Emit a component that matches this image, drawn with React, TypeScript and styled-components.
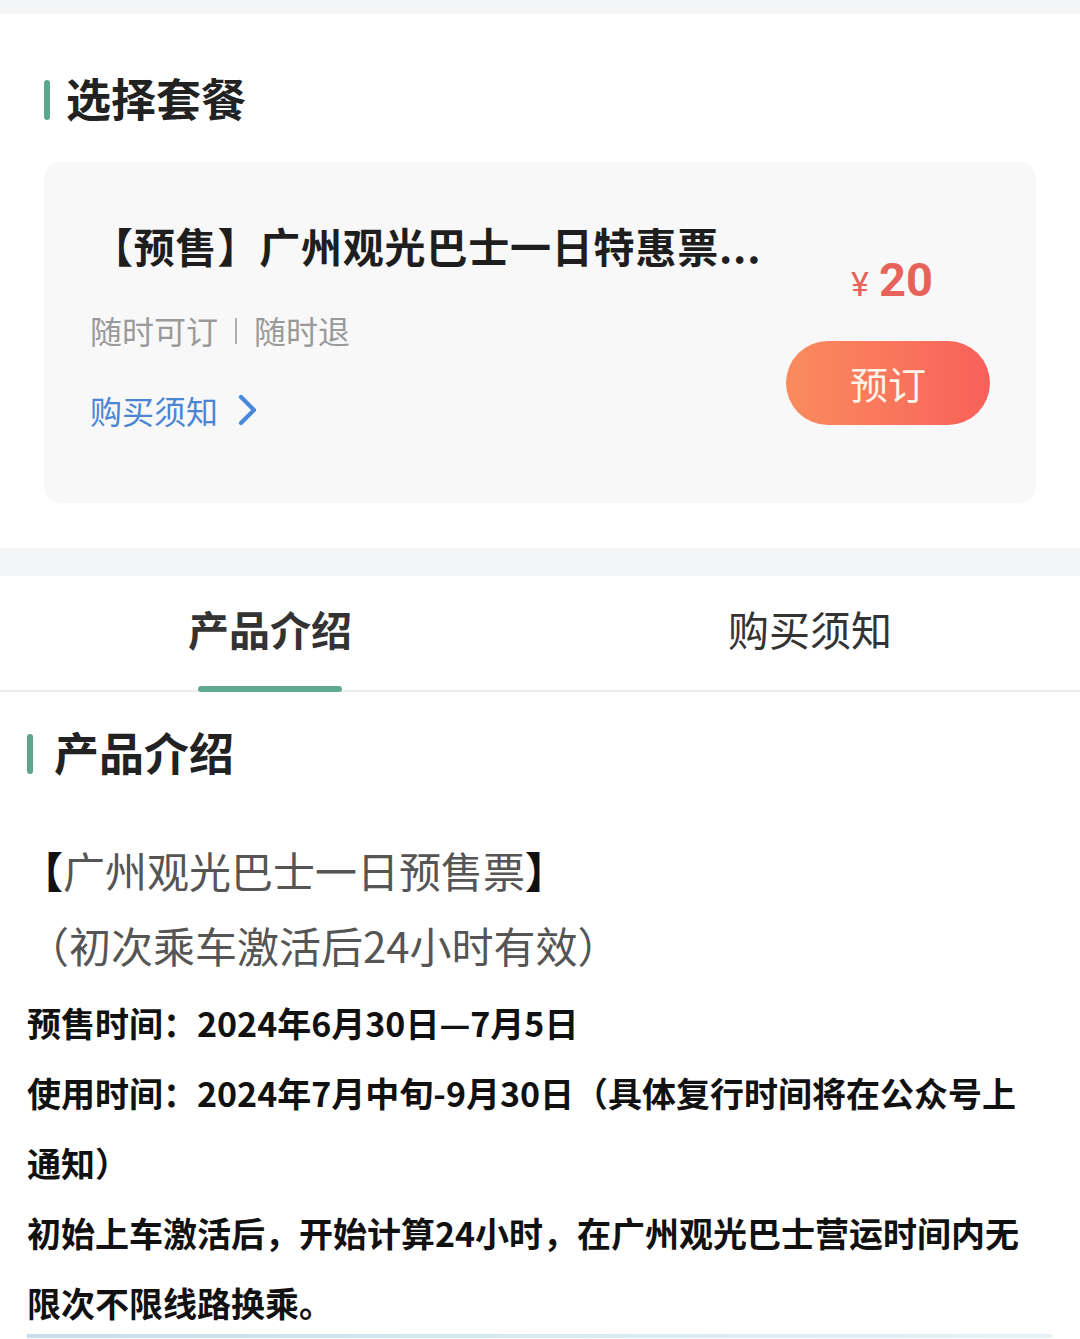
import React from "react";
import styled, { createGlobalStyle } from "styled-components";

const GlobalStyle = createGlobalStyle`
  * { box-sizing: border-box; }
  body {
    margin: 0;
    background: #ffffff;
    font-family: "Noto Sans CJK SC", "Noto Sans", sans-serif;
    color: #222;
  }
`;

const Page = styled.div`
  width: 1080px;
  min-height: 1339px;
  background: #ffffff;
  display: flex;
  flex-direction: column;
  overflow: hidden;
`;

const GrayStrip = styled.div<{ $h: number }>`
  height: ${(p) => p.$h}px;
  background: #f4f5f7;
  flex-shrink: 0;
`;

const PackageSection = styled.section`
  padding: 54px 44px 45px;
  display: flex;
  flex-direction: column;
  gap: 34px;
`;

const SectionHeading = styled.h2<{ $gap: number }>`
  margin: 0;
  display: flex;
  align-items: center;
  gap: ${(p) => p.$gap}px;
  font-size: 45px;
  line-height: 60px;
  font-weight: 700;
  color: #222;
  &::before {
    content: "";
    width: 6px;
    height: 40px;
    margin-top: 4px;
    border-radius: 3px;
    background: #5ba68c;
  }
`;

const Card = styled.div`
  background: #f8f8f9;
  border-radius: 16px;
  padding: 55px 46px 73px 46px;
  display: flex;
  justify-content: space-between;
`;

const CardInfo = styled.div`
  display: flex;
  flex-direction: column;
`;

const CardTitle = styled.div`
  font-size: 41px;
  line-height: 56px;
  font-weight: 700;
  letter-spacing: 0.8px;
  color: #1e1e1e;
  white-space: nowrap;
  margin-left: 2px;
`;

const Features = styled.div`
  margin-top: 37px;
  display: flex;
  align-items: center;
  font-size: 32px;
  line-height: 40px;
  color: #9a9a9a;
`;

const Sep = styled.span`
  display: inline-block;
  width: 2px;
  height: 26px;
  background: #b0b0b0;
  margin: 2px 17px 0;
`;

const NoticeLink = styled.a`
  margin-top: 40px;
  display: flex;
  align-items: center;
  gap: 18px;
  font-size: 32px;
  line-height: 40px;
  color: #4a86d4;
  text-decoration: none;
`;

const PriceCol = styled.div`
  width: 204px;
  padding-top: 38px;
  display: flex;
  flex-direction: column;
  align-items: center;
  gap: 32px;
`;

const Price = styled.div`
  display: flex;
  align-items: baseline;
  color: #e8625c;
  font-family: Roboto, "Noto Sans", sans-serif;
  line-height: 50px;
  margin-left: 8px;
`;

const Yen = styled.span`
  font-size: 34px;
  margin-right: 10px;
`;

const Amount = styled.span`
  font-size: 47px;
  font-weight: 700;
`;

const BookButton = styled.button`
  width: 204px;
  height: 84px;
  border: none;
  border-radius: 42px;
  background: linear-gradient(90deg, #fa8b5d 0%, #f9775c 50%, #f8605a 100%);
  color: #fff3ea;
  font-family: "Noto Sans CJK SC", sans-serif;
  font-size: 38px;
  line-height: 84px;
  padding: 0;
`;

const TabBar = styled.div`
  display: flex;
  height: 116px;
  border-bottom: 2px solid #ececec;
`;

const Tab = styled.div<{ $active?: boolean }>`
  flex: 1;
  position: relative;
  display: flex;
  justify-content: center;
  padding-top: 24px;
  font-size: 41px;
  line-height: 56px;
  color: #333;
  font-weight: ${(p) => (p.$active ? 700 : 400)};
`;

const TabIndicator = styled.span`
  position: absolute;
  left: 50%;
  bottom: -2px;
  transform: translateX(-50%);
  width: 144px;
  height: 6px;
  border-radius: 3px;
  background: #5fa891;
`;

const IntroSection = styled.section`
  padding: 30px 40px 0 27px;
  display: flex;
  flex-direction: column;
`;

const IntroBody = styled.div`
  margin-top: 50px;
  display: flex;
  flex-direction: column;
`;

const PlainLine = styled.div<{ $indent: number }>`
  font-size: 42px;
  line-height: 75px;
  color: #555;
  margin-left: ${(p) => p.$indent}px;
  white-space: nowrap;
`;

const Bracket = styled.span`
  font-weight: 900;
  color: #111;
`;

const BoldPara = styled.p`
  margin: 0;
  font-size: 34px;
  line-height: 70px;
  font-weight: 700;
  color: #111;
`;

const BoldBlock = styled.div`
  margin-top: 6px;
  display: flex;
  flex-direction: column;
`;

const ImageEdge = styled.div`
  margin-top: -4px;
  margin-right: -12px;
  height: 4px;
  background: linear-gradient(90deg, #c6deeb, #d8e9f2 50%, #e6f1f6);
`;

const Chevron = () => (
  <svg width="22" height="32" viewBox="0 0 22 32" fill="none">
    <polyline
      points="5,3 18,16 5,29"
      stroke="#4b88dc"
      strokeWidth="4.2"
      strokeLinecap="round"
      strokeLinejoin="round"
    />
  </svg>
);

export default function App() {
  return (
    <>
      <GlobalStyle />
      <Page>
        <GrayStrip $h={14} />
        <PackageSection>
          <SectionHeading $gap={16}>选择套餐</SectionHeading>
          <Card>
            <CardInfo>
              <CardTitle>【预售】广州观光巴士一日特惠票...</CardTitle>
              <Features>
                随时可订
                <Sep />
                随时退
              </Features>
              <NoticeLink href="#">
                购买须知
                <Chevron />
              </NoticeLink>
            </CardInfo>
            <PriceCol>
              <Price>
                <Yen>¥</Yen>
                <Amount>20</Amount>
              </Price>
              <BookButton>预订</BookButton>
            </PriceCol>
          </Card>
        </PackageSection>
        <GrayStrip $h={28} />
        <TabBar>
          <Tab $active>
            产品介绍
            <TabIndicator />
          </Tab>
          <Tab>购买须知</Tab>
        </TabBar>
        <IntroSection>
          <SectionHeading $gap={21}>产品介绍</SectionHeading>
          <IntroBody>
            <PlainLine $indent={-6}>
              <Bracket>【</Bracket>广州观光巴士一日预售票<Bracket>】</Bracket>
            </PlainLine>
            <PlainLine $indent={0}>（初次乘车激活后24小时有效）</PlainLine>
            <BoldBlock>
              <BoldPara>预售时间：2024年6月30日—7月5日</BoldPara>
              <BoldPara>
                使用时间：2024年7月中旬-9月30日（具体复行时间将在公众号上通知）
              </BoldPara>
              <BoldPara>
                初始上车激活后，开始计算24小时，在广州观光巴士营运时间内无限次不限线路换乘。
              </BoldPara>
            </BoldBlock>
          </IntroBody>
          <ImageEdge />
        </IntroSection>
      </Page>
    </>
  );
}
